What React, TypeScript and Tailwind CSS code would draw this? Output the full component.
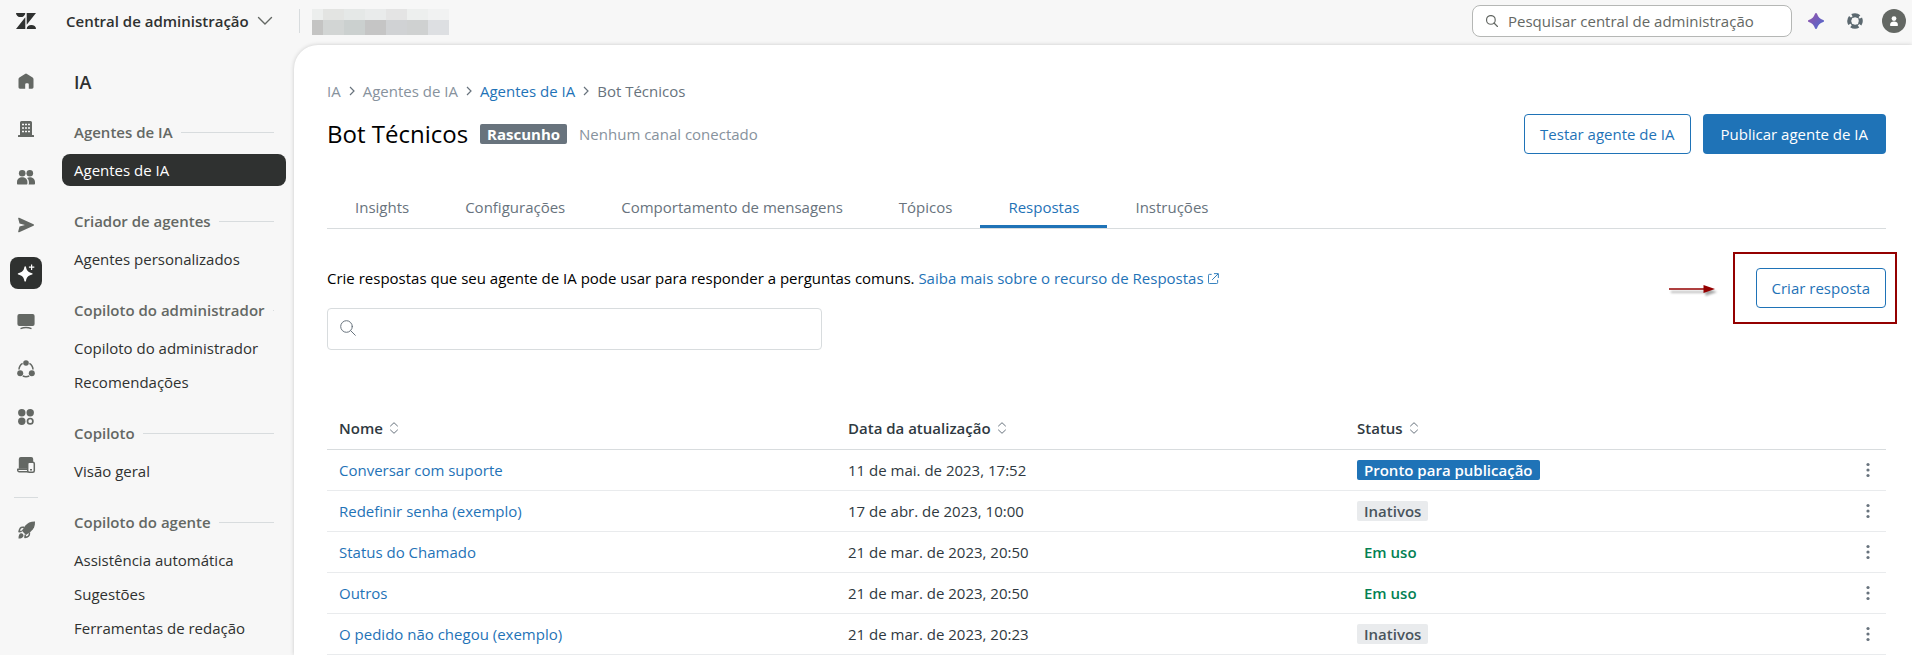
import type { ReactNode } from 'react';
import clsx from 'clsx';

const sections = [
  { title: 'Agentes de IA', items: ['Agentes de IA'] },
  { title: 'Criador de agentes', items: ['Agentes personalizados'] },
  { title: 'Copiloto do administrador', items: ['Copiloto do administrador', 'Recomendações'] },
  { title: 'Copiloto', items: ['Visão geral'] },
  { title: 'Copiloto do agente', items: ['Assistência automática', 'Sugestões', 'Ferramentas de redação'] },
];

const tabs = ['Insights', 'Configurações', 'Comportamento de mensagens', 'Tópicos', 'Respostas', 'Instruções'];

type Status = 'Pronto para publicação' | 'Inativos' | 'Em uso';

const answers: { name: string; date: string; status: Status }[] = [
  { name: 'Conversar com suporte', date: '11 de mai. de 2023, 17:52', status: 'Pronto para publicação' },
  { name: 'Redefinir senha (exemplo)', date: '17 de abr. de 2023, 10:00', status: 'Inativos' },
  { name: 'Status do Chamado', date: '21 de mar. de 2023, 20:50', status: 'Em uso' },
  { name: 'Outros', date: '21 de mar. de 2023, 20:50', status: 'Em uso' },
  { name: 'O pedido não chegou (exemplo)', date: '21 de mar. de 2023, 20:23', status: 'Inativos' },
];

const statusStyles: Record<Status, string> = {
  'Pronto para publicação': 'bg-[#1f73b7] text-white',
  Inativos: 'bg-[#e9ebed] text-[#49545c]',
  'Em uso': 'text-[#038153]',
};

const railIcons: { label: string; icon: ReactNode }[] = [
  {
    label: 'Início',
    icon: <path d="M7 .9a1.8 1.8 0 0 1 2 0l5.600 3.700c.6.400.9 1 .9 1.700v8a1.400 1.400 0 0 1-1.400 1.400h-3.300v-4.200a1.200 1.200 0 0 0-1.200-1.200H8.400a1.200 1.200 0 0 0-1.200 1.200v4.200H1.900A1.400 1.400 0 0 1 .5 14.300v-8c0-.7.3-1.300.9-1.700z" />,
  },
  {
    label: 'Conta',
    icon: (
      <>
        <path d="M3.500 0h9A1.500 1.500 0 0 1 14 1.500V14h1.500a.5.500 0 0 1 .5.500V16H0v-1.500a.5.500 0 0 1 .5-.5H2V1.500A1.500 1.500 0 0 1 3.500 0z" />
        <path d="M4 3.500h2M7 3.500h2M10 3.500h2M4 7h2M7 7h2M10 7h2M4 10.500h2M7 10.500h2M10 10.500h2" stroke="#f7f7f7" strokeWidth="1.500" />
      </>
    ),
  },
  {
    label: 'Pessoas',
    icon: (
      <>
        <circle cx="4.200" cy="4.200" r="3.300" />
        <circle cx="11.800" cy="4.200" r="3.300" />
        <path d="M4.200 8.300c3 0 5.200 2 5.200 4.700v1.500c0 .6-.4 1-1 1H0c-.6 0-1-.4-1-1V13c0-2.700 2.200-4.700 5.200-4.700z" />
        <path d="M9 8.900c.8-.4 1.700-.6 2.700-.6 3 0 5.300 2 5.300 4.700v1.500c0 .6-.4 1-1 1h-5.500c.3-.3.400-.7.400-1.200V13c0-1.700-.7-3.100-1.900-4.100z" />
      </>
    ),
  },
  {
    label: 'Canais',
    icon: <path d="M1.200.8 15.500 7.200a.9.900 0 0 1 0 1.600L1.200 15.200a.7.700 0 0 1-1-.8L1.500 9.500 7 8 1.500 6.500.2 1.600a.7.700 0 0 1 1-.8z" />,
  },
  {
    label: 'IA',
    icon: (
      <>
        <path d="M7.200 1.200c.5 0 .7.300.8.700.7 3.700 2 5.200 6.100 6.300.7.200.7 1.200 0 1.400-4.100 1.100-5.400 2.600-6.100 6.300-.1.900-1.500.9-1.600 0C5.700 12.200 4.400 10.700.3 9.600c-.7-.2-.7-1.200 0-1.400 4.100-1.100 5.400-2.600 6.100-6.300.1-.4.400-.7.800-.7z" />
        <path d="M13.600-.5v5.400M10.900 2.200h5.400" stroke="currentColor" strokeWidth="1.200" />
      </>
    ),
  },
  {
    label: 'Espaços de trabalho',
    icon: (
      <>
        <rect x="-.6" y="1" width="17.200" height="12" rx="2" />
        <path d="M2.500 15.600c3-1.200 8-1.200 11 0" fill="none" stroke="currentColor" strokeWidth="1.400" />
      </>
    ),
  },
  {
    label: 'Objetos e regras',
    icon: (
      <>
        <circle cx="8" cy="2" r="2.800" />
        <circle cx="2.200" cy="12.200" r="3" />
        <circle cx="13.800" cy="12.200" r="3" />
        <path d="M4.600 2.300A7.500 7.500 0 0 0 1 8.600M11.400 2.300A7.500 7.500 0 0 1 15 8.600M4.800 15a7.500 7.500 0 0 0 6.400 0" fill="none" stroke="currentColor" strokeWidth="1.500" />
      </>
    ),
  },
  {
    label: 'Aplicativos',
    icon: (
      <>
        <circle cx="3.800" cy="3.800" r="3.700" />
        <circle cx="12.200" cy="3.800" r="3.700" />
        <circle cx="3.800" cy="12.200" r="3.700" />
        <circle cx="12.200" cy="12.200" r="2.700" fill="none" stroke="currentColor" strokeWidth="1.700" />
      </>
    ),
  },
  {
    label: 'Dispositivos',
    icon: (
      <>
        <path d="M2.800 0h10.400a2 2 0 0 1 2 2v9.800H.8V2a2 2 0 0 1 2-2z" />
        <path d="M-.3 12.200H10v2.600H1.200a1.500 1.500 0 0 1-1.500-1.500z" fill="#f7f7f7" stroke="currentColor" strokeWidth="1.400" strokeLinejoin="round" />
        <rect x="9.700" y="5.200" width="6.600" height="10.100" rx="1.500" fill="#f7f7f7" stroke="currentColor" strokeWidth="1.500" />
        <path d="M12 12.800h2" stroke="currentColor" strokeWidth="1.400" />
      </>
    ),
  },
];

function RailIcon({ children }: { children: ReactNode }) {
  return (
    <svg viewBox="0 0 16 16" className="size-4 overflow-visible" fill="currentColor" aria-hidden="true">
      {children}
    </svg>
  );
}

function SearchIcon({ className }: { className: string }) {
  return (
    <svg viewBox="0 0 16 16" className={className} fill="none" stroke="currentColor" strokeLinecap="round" aria-hidden="true">
      <circle cx="6.500" cy="6.500" r="5.800" />
      <path d="m10.700 10.700 4.600 4.600" />
    </svg>
  );
}

function SortIcon() {
  return (
    <svg viewBox="0 0 10 12" className="h-3 w-[10px]" fill="none" stroke="#68737d" strokeLinecap="round" strokeLinejoin="round" aria-hidden="true">
      <path d="M1.500 4 5 .7 8.500 4M1.500 8 5 11.300 8.500 8" />
    </svg>
  );
}

function BreadcrumbChevron() {
  return (
    <svg viewBox="0 0 6 10" className="h-[10px] w-[6px]" fill="none" stroke="#68737d" strokeWidth="1.200" aria-hidden="true">
      <path d="m1 1 4 4-4 4" />
    </svg>
  );
}

function Header() {
  return (
    <header className="flex h-[45px] items-center pr-[6px] pb-[3px] pl-4">
      <svg viewBox="0 0 20 16" className="h-4 w-5" fill="#2f3130" role="img" aria-label="Zendesk">
        <path d="M9.300 4.200V16H0zM9.300 0a4.650 4.100 0 0 1-9.300 0zM10.700 16a4.650 4.100 0 0 1 9.300 0zM10.700 11.800V0H20z" />
      </svg>
      <button type="button" className="ml-[30px] flex items-center gap-2 font-semibold">
        Central de administração
        <svg viewBox="0 0 16 10" className="h-[10px] w-4" fill="none" stroke="#646864" strokeWidth="1.400" strokeLinecap="round" aria-hidden="true">
          <path d="m1.500 1.500 6.500 6.500 6.500-6.500" />
        </svg>
      </button>
      <div className="ml-auto flex items-center">
        <label className="flex h-8 w-80 items-center gap-[10px] rounded-lg border border-[#b5b7b5] bg-white px-[13px] text-[#646864]">
          <SearchIcon className="size-3 stroke-[1.6]" />
          <input
            type="search"
            aria-label="Pesquisar central de administração"
            placeholder="Pesquisar central de administração"
            className="min-w-0 flex-1 outline-none placeholder:text-[#646864]"
          />
        </label>
        <button type="button" aria-label="Copiloto" className="ml-4">
          <svg viewBox="0 0 16 16" className="size-4">
            <defs>
              <linearGradient id="spark" x1="0" y1="0" x2="1" y2="1">
                <stop offset="0" stopColor="#9a52a8" />
                <stop offset="1" stopColor="#4a6bd0" />
              </linearGradient>
            </defs>
            <path d="M8 0c.5 0 .8.300 1 .8C10.200 4.100 11.900 5.800 15.200 7c1.100.4 1.100 1.600 0 2C11.900 10.200 10.200 11.900 9 15.200c-.4 1.100-1.600 1.100-2 0C5.800 11.900 4.100 10.200.8 9c-1.100-.4-1.100-1.600 0-2C4.100 5.800 5.800 4.100 7 .8c.2-.5.5-.8 1-.8z" fill="url(#spark)" />
          </svg>
        </button>
        <button type="button" aria-label="Ajuda" className="ml-[23px]">
          <svg viewBox="0 0 16 16" className="size-4" fill="none" stroke="#5c6970">
            <circle cx="8" cy="8" r="5.800" strokeWidth="4" strokeDasharray="7.100 2.010" strokeDashoffset="3.550" />
            <circle cx="8" cy="8" r="4.600" strokeWidth="1.200" />
          </svg>
        </button>
        <button type="button" aria-label="Perfil" className="ml-[19px] flex size-6 items-center justify-center rounded-full bg-[#646864]">
          <svg viewBox="0 0 12 12" className="size-3" fill="#fff">
            <circle cx="6" cy="3.600" r="2.400" />
            <path d="M2.200 11V9.200C2.200 7.500 3.800 6.600 6 6.600s3.800.9 3.800 2.600V11z" />
          </svg>
        </button>
      </div>
    </header>
  );
}

/* Blurred account name next to the product switcher */
function AccountName() {
  return (
    <div className="absolute top-[9px] left-[299px] flex h-[26px] w-[150px] gap-3">
      <span className="h-6 w-px bg-[#d8dcde]" />
      <span className="flex flex-1 flex-col">
        <span className="flex h-[11px]">
          <i className="w-[11px] bg-[#eceeed]" />
          <i className="w-[21px] bg-[#e3e4e2]" />
          <i className="w-[21px] bg-[#e5e8e7]" />
          <i className="w-[21px] bg-[#e9ebeb]" />
          <i className="w-[21px] bg-[#e4e4e4]" />
          <i className="w-[21px] bg-[#edefee]" />
          <i className="flex-1 bg-[#f1f2f2]" />
        </span>
        <span className="flex h-[15px]">
          <i className="w-[11px] bg-[#c4c4c3]" />
          <i className="w-[21px] bg-[#d2d5d4]" />
          <i className="w-[21px] bg-[#cbd0cf]" />
          <i className="w-[21px] bg-[#c5c5c5]" />
          <i className="w-[21px] bg-[#d0d2d4]" />
          <i className="w-[21px] bg-[#cfd1d1]" />
          <i className="flex-1 bg-[#dddfe2]" />
        </span>
      </span>
    </div>
  );
}

function Rail() {
  return (
    <nav aria-label="Principal" className="flex w-[52px] shrink-0 flex-col items-center gap-4 pt-5 text-[#646864]">
      {railIcons.map(({ label, icon }) => (
        <button
          key={label}
          type="button"
          aria-label={label}
          className={clsx('flex size-8 items-center justify-center rounded-lg', label === 'IA' && 'bg-[#2f3130] text-white')}
        >
          <RailIcon>{icon}</RailIcon>
        </button>
      ))}
      <hr className="w-6 border-[#d8dcde]" />
      <button type="button" aria-label="Novidades" className="flex size-8 items-center justify-center">
        <RailIcon>
          <path d="M17-.5c.3 4.200-1.200 7.600-4.200 10.100L8 13 3.800 8.800 7.200 3.700C9.400.9 12.800-.6 17-.5z" />
          <path d="M6.200 5.200H4.500C3 5.200 1.400 7 1 9.700l2.800-.4M11.400 10.300V12c0 1.500-1.800 3.100-4.500 3.500l.4-2.800" fill="none" stroke="currentColor" strokeWidth="1.500" strokeLinejoin="round" />
          <path d="M2.900 11.300a2.200 2.200 0 0 1 2.600 2.600c-.3 1.700-2.400 2.600-5 2.600 0-2.600.7-4.900 2.400-5.200z" />
        </RailIcon>
      </button>
    </nav>
  );
}

function Sidebar() {
  return (
    <nav aria-label="IA" className="flex w-[242px] shrink-0 flex-col pt-6 pr-2 pl-[10px]">
      <h2 className="mb-6 px-3 text-lg leading-[27px] font-semibold">IA</h2>
      <div className="flex flex-col gap-[23px]">
        {sections.map((section) => (
          <section key={section.title}>
            <h3 className="mb-[10px] flex items-center gap-2 px-3 leading-6 font-semibold whitespace-nowrap text-[#646864]">
              {section.title}
              <span className="h-px flex-1 bg-[#d8dcde]" />
            </h3>
            <ul className="flex flex-col gap-[2px]">
              {section.items.map((item) => (
                <li key={item}>
                  <a
                    href="#"
                    className={clsx(
                      'flex h-8 items-center rounded-lg px-3 whitespace-nowrap',
                      item === 'Agentes de IA' && 'bg-[#2f3130] text-white',
                    )}
                  >
                    {item}
                  </a>
                </li>
              ))}
            </ul>
          </section>
        ))}
      </div>
    </nav>
  );
}

function AnswersTable() {
  return (
    <table className="mt-[58px] w-full table-fixed border-collapse text-left text-[#2f3941]">
      <thead>
        <tr className="h-[41px] border-b border-[#d8dcde]">
          {['Nome', 'Data da atualização', 'Status'].map((column) => (
            <th key={column} scope="col" className="px-3 font-semibold">
              <button type="button" className="flex items-center gap-[6px]">
                {column}
                <SortIcon />
              </button>
            </th>
          ))}
          <td className="w-8" />
        </tr>
      </thead>
      <tbody>
        {answers.map(({ name, date, status }) => (
          <tr key={name} className="h-[41px] border-b border-[#e9ebed]">
            <td className="px-3">
              <a href="#" className="text-[#1f73b7]">
                {name}
              </a>
            </td>
            <td className="px-3">{date}</td>
            <td className="px-3">
              <span className={clsx('flex h-5 w-fit items-center overflow-hidden rounded-[2px] px-[7px] font-semibold', statusStyles[status])}>
                {status}
              </span>
            </td>
            <td>
              <button type="button" aria-label={`Ações para ${name}`} className="flex h-8 w-7 items-center justify-center">
                <svg viewBox="0 0 4 16" className="h-4 w-1" fill="#68737d">
                  <circle cx="2" cy="2.500" r="1.600" />
                  <circle cx="2" cy="8" r="1.600" />
                  <circle cx="2" cy="13.500" r="1.600" />
                </svg>
              </button>
            </td>
          </tr>
        ))}
      </tbody>
    </table>
  );
}

export default function App() {
  return (
    <div className="relative flex min-h-screen flex-col bg-[#f7f7f7] font-['Open_Sans','Noto_Sans',sans-serif] text-[15px] leading-5 text-[#2f3130]">
      <Header />
      <AccountName />
      <div className="flex flex-1">
        <Rail />
        <Sidebar />
        <main className="min-w-0 flex-1 rounded-tl-3xl bg-white pt-9 pr-[26px] pl-[33px] shadow-[0_0_4px_rgba(0,0,0,0.18)]">
          <nav aria-label="Trilha" className="flex items-center gap-2 text-[#87929d]">
            <a href="#">IA</a>
            <BreadcrumbChevron />
            <a href="#">Agentes de IA</a>
            <BreadcrumbChevron />
            <a href="#" className="text-[#1f73b7]">Agentes de IA</a>
            <BreadcrumbChevron />
            <span className="text-[#68737d]">Bot Técnicos</span>
          </nav>

          <div className="mt-[13px] flex h-10 items-center">
            <h1 className="text-2xl text-black">Bot Técnicos</h1>
            <span className="ml-3 flex h-5 items-center rounded-[2px] bg-[#68737d] px-[7px] font-bold text-white">Rascunho</span>
            <span className="ml-3 text-[#87929d]">Nenhum canal conectado</span>
            <div className="ml-auto flex gap-3">
              <button type="button" className="h-10 rounded border border-[#1f73b7] px-[15px] text-[#1f73b7]">
                Testar agente de IA
              </button>
              <button type="button" className="h-10 rounded bg-[#1f73b7] px-[18px] text-white">
                Publicar agente de IA
              </button>
            </div>
          </div>

          <div role="tablist" className="mt-[34px] flex h-[41px] border-b border-[#d8dcde]">
            {tabs.map((tab) => (
              <button
                key={tab}
                type="button"
                role="tab"
                aria-selected={tab === 'Respostas'}
                className={clsx(
                  'border-b-[3px] px-7',
                  tab === 'Respostas' ? 'border-[#1f73b7] text-[#1f73b7]' : 'border-transparent text-[#68737d]',
                )}
              >
                {tab}
              </button>
            ))}
          </div>

          <div className="mt-[39px] flex items-start justify-between">
            <div>
              <p className="text-black">
                Crie respostas que seu agente de IA pode usar para responder a perguntas comuns.{' '}
                <a href="#" className="inline-flex items-center gap-1 text-[#1f73b7]">
                  Saiba mais sobre o recurso de Respostas
                  <svg viewBox="0 0 12 12" className="size-[11px]" fill="none" stroke="currentColor" aria-hidden="true">
                    <path d="M4 1.500H1.500a1 1 0 0 0-1 1v8a1 1 0 0 0 1 1h8a1 1 0 0 0 1-1V7.500M4.500 7.500l6.500-6.500M6.500.7h4.800v4.800" />
                  </svg>
                </a>
              </p>
              <label className="mt-5 flex h-[42px] w-[495px] rounded border border-[#d8dcde] px-3 pt-[11px] text-[#68737d]">
                <SearchIcon className="size-4" />
                <input type="search" aria-label="Pesquisar respostas" className="ml-2 h-5 min-w-0 flex-1 outline-none" />
              </label>
            </div>
            <div className="relative">
              <button type="button" className="h-10 rounded border border-[#1f73b7] px-[15px] text-[#1f73b7]">
                Criar resposta
              </button>
              <div className="pointer-events-none absolute -inset-y-4 right-[-11px] -left-[23px] border-2 border-[#940000]" />
              <svg viewBox="0 0 46 10" className="pointer-events-none absolute top-4 right-[171px] h-[10px] w-[46px] drop-shadow-[2px_3px_1px_rgba(0,0,0,0.35)]" aria-hidden="true">
                <path d="M0 5h36" stroke="#940000" strokeWidth="1.500" />
                <path d="M34.500 1 46 5l-11.500 4z" fill="#940000" />
              </svg>
            </div>
          </div>

          <AnswersTable />
        </main>
      </div>
    </div>
  );
}
